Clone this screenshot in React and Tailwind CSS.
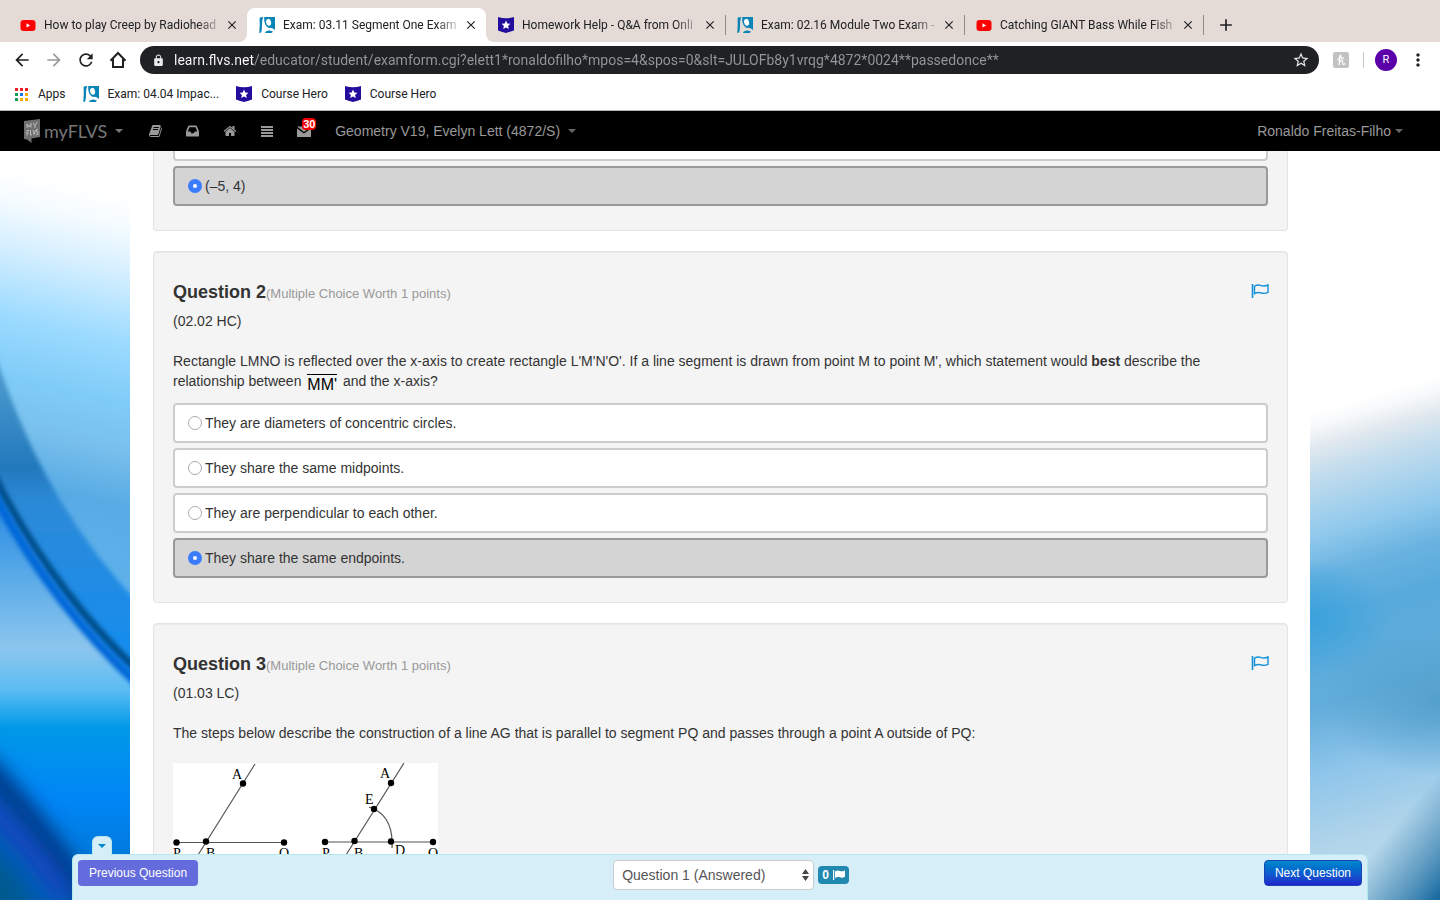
import { MdArrowBack, MdArrowForward, MdRefresh, MdLock, MdStarBorder, MdMoreVert, MdClose, MdAdd } from 'react-icons/md'

const tabs = [
  { id: 1, title: 'How to play Creep by Radiohead', icon: YoutubeIcon },
  { id: 2, title: 'Exam: 03.11 Segment One Exam', icon: FlvsIcon, active: true },
  { id: 3, title: 'Homework Help - Q&A from Onli', icon: HeroIcon, divider: true },
  { id: 4, title: 'Exam: 02.16 Module Two Exam -', icon: FlvsIcon, divider: true },
  { id: 5, title: 'Catching GIANT Bass While Fish', icon: YoutubeIcon, divider: true }
]

const bookmarks = [
  { id: 1, title: 'Apps', icon: AppsIcon },
  { id: 2, title: 'Exam: 04.04 Impac...', icon: FlvsIcon },
  { id: 3, title: 'Course Hero', icon: HeroIcon },
  { id: 4, title: 'Course Hero', icon: HeroIcon }
]

const questionTwoOptions = [
  { id: 'a', text: 'They are diameters of concentric circles.' },
  { id: 'b', text: 'They share the same midpoints.' },
  { id: 'c', text: 'They are perpendicular to each other.' },
  { id: 'd', text: 'They share the same endpoints.', checked: true }
]

function YoutubeIcon() {
  return (
    <svg className="w-4 h-4 shrink-0" viewBox="0 0 16 16">
      <rect x="0.500" y="3" width="15" height="11" rx="3" fill="#ff0000" />
      <path d="M6.5 6.3v4.2l3.600-2.1z" fill="#fff" />
    </svg>
  )
}

function FlvsIcon() {
  return (
    <svg className="w-4 h-4 shrink-0" viewBox="0 0 16 16">
      <path d="M.6.8Q2 0 4.200 0 2.800 4 3 8t-.8 7.400L.3 16Q1 8 .6.8Z" fill="#0a84b6" />
      <path d="M5.200 0H16v13q-2-1.800-4.200-2.200L10 11 9 10.500Q4.800 8 5.200 0Z" fill="#0a84b6" />
      <ellipse cx="9.600" cy="5.300" rx="2.500" ry="3.500" fill="#fff" transform="rotate(-12 9.600 5.300)" />
      <path d="M6 15.200q1.800-1.800 4.500-1.600 2.500.2 3.500 1.200L12.500 16H6.500Z" fill="#0a84b6" />
    </svg>
  )
}

function HeroIcon() {
  return (
    <svg className="w-4 h-4 shrink-0" viewBox="0 0 16 16">
      <path d="M0 0q8 2.600 16 0v13.500q-3 1-8 2.500-5-1.500-8-2.500z" fill="#230d9c" />
      <path d="m8 3.600 1.300 2.900 3.100.3-2.300 2.100.7 3.100L8 10.400 5.200 12l.7-3.100-2.300-2.100 3.100-.3z" fill="#fff" />
    </svg>
  )
}

function AppsIcon() {
  const colors = ['#ea1c2c', '#ea1c2c', '#ea1c2c', '#0f9d58', '#1a73e8', '#f9ab00', '#0f9d58', '#f9ab00', '#f9ab00']
  return (
    <svg className="w-[15px] h-[15px] shrink-0" viewBox="0 0 15 15">
      {colors.map((color, i) => (
        <rect key={i} x={1 + (i % 3) * 5} y={1 + Math.floor(i / 3) * 5} width="3" height="3" fill={color} />
      ))}
    </svg>
  )
}

function Caret({ className }) {
  return (
    <svg className={className} viewBox="0 0 8 4">
      <path d="M0 0h8L4 4z" fill="currentColor" />
    </svg>
  )
}

function FlagOutline() {
  return (
    <svg className="block w-[18px] h-4" viewBox="0 0 18 16" fill="none" stroke="#1190d8">
      <path d="M1.500 2v14" strokeWidth="1.600" />
      <path d="M3.500 4.200c2-1.200 4-1.600 6-.8s4.500 1.100 7.500-.4v7.400c-2.800 1.400-5 1.200-7 .5s-4.300-.4-6.500.7z" strokeWidth="1.400" />
    </svg>
  )
}

function BrowserTabs() {
  return (
    <div className="flex h-[42px] bg-[#e4dad6] pl-2 pt-2 text-xs text-[#202124]">
      {tabs.map((tab) => {
        const Icon = tab.icon
        return (
          <div
            key={tab.id}
            className={tab.active ? 'relative flex w-[239px] items-center rounded-t-lg bg-white pl-3 pr-[7px]' : 'relative flex w-[239px] items-center pl-3 pr-[7px]'}
          >
            {tab.active && (
              <>
                <svg className="absolute -left-2 bottom-0 w-2 h-2" viewBox="0 0 8 8">
                  <path d="M8 0v8H0a8 8 0 0 0 8-8z" fill="#fff" />
                </svg>
                <svg className="absolute -right-2 bottom-0 w-2 h-2" viewBox="0 0 8 8">
                  <path d="M0 0v8h8a8 8 0 0 1-8-8z" fill="#fff" />
                </svg>
              </>
            )}
            <Icon />
            <span className="ml-2 min-w-0 flex-1 whitespace-nowrap mask-r-from-85%">{tab.title}</span>
            <button className="flex w-4 h-4 items-center justify-center" aria-label="Close tab">
              <MdClose size={14} />
            </button>
            {tab.divider && <span className="absolute -right-px top-[7px] h-5 w-px bg-[#8f8987]" />}
          </div>
        )
      })}
      <button className="ml-[13px] flex items-center" aria-label="New tab">
        <MdAdd size={20} />
      </button>
    </div>
  )
}

function Toolbar() {
  return (
    <div className="flex h-9 items-center bg-white pl-3 pr-3 text-[#202124]">
      <div className="flex gap-3">
        <button aria-label="Back"><MdArrowBack size={20} /></button>
        <button aria-label="Forward" className="text-[#9a9b9d]"><MdArrowForward size={20} /></button>
        <button aria-label="Reload"><MdRefresh size={20} /></button>
        <button aria-label="Home">
          <svg className="w-5 h-5" viewBox="0 0 20 20" fill="none" stroke="currentColor" strokeWidth="2">
            <path d="M2.500 10.800 10 3l7.500 7.800M5 9v8h10V9" />
          </svg>
        </button>
      </div>
      <div className="ml-3 flex h-7 flex-1 items-center rounded-full bg-[#202124] pl-3 pr-[9px] text-[#e8eaed]">
        <MdLock size={13} className="shrink-0" />
        <input
          aria-label="Address"
          className="ml-[9px] min-w-0 flex-1 bg-linear-to-r from-white from-[80px] to-[#94979b] to-[80px] bg-clip-text text-sm text-transparent outline-none"
          defaultValue="learn.flvs.net/educator/student/examform.cgi?elett1*ronaldofilho*mpos=4&spos=0&slt=JULOFb8y1vrqg*4872*0024**passedonce**"
        />
        <button aria-label="Bookmark this page"><MdStarBorder size={18} /></button>
      </div>
      <button className="ml-[14px] flex w-4 h-4 items-center justify-center rounded-xs bg-[#c2c2c2]" aria-label="Honey">
        <svg className="w-3 h-3" viewBox="0 0 12 12" fill="none" stroke="#fff" strokeWidth="1.200">
          <path d="M2 5.500C5 4.500 6.500 3 5.800 1.400 4.800.6 4.400 3 4.200 11M4.300 9C5 6 7.600 5 7.500 7.300 7.200 10 8 11.500 10 9.500M6 4.200h3" />
        </svg>
      </button>
      <span className="ml-[14px] h-4 w-px bg-[#c4c5c7]" />
      <button className="ml-[11px] w-[22px] h-[22px] rounded-full bg-[#5b00a8] text-[11px] text-white">R</button>
      <button className="ml-[11px]" aria-label="Menu"><MdMoreVert size={20} /></button>
    </div>
  )
}

function BookmarksBar() {
  return (
    <div className="flex h-[33px] items-center gap-[17px] border-b border-[#b6b4b6] bg-white px-[14px] text-xs text-[#202124]">
      {bookmarks.map((bookmark) => {
        const Icon = bookmark.icon
        return (
          <a key={bookmark.id} href="#" className="flex items-center gap-[9px]">
            <Icon />
            {bookmark.title}
          </a>
        )
      })}
    </div>
  )
}

function SiteNav() {
  return (
    <nav className="flex h-10 items-center bg-black px-6 text-sm text-[#999]">
      <a href="#" className="flex items-center text-[#777]">
        <svg className="w-4 h-6" viewBox="0 0 16 24">
          <path d="M0 2 16 0v18l-8.500 1.500V24L3 20.500 0 20z" fill="#707070" />
          <path d="M3 9V5l2 3 2-3.500v4M9 4l2 2.500L13 3M11 6.500V9M3 16.500v-5h2M3 14h1.500M6.500 11v5h1.500M9 11l1.200 4.500L11.500 11M14 10.500h-1.500v2.200H14v2.600h-2" fill="none" stroke="#c4c4c4" strokeWidth="0.900" />
        </svg>
        <span className="ml-1 font-[Lato] text-lg leading-6">myFLVS</span>
        <Caret className="ml-2 w-2 h-1" />
      </a>
      <div className="ml-[26px] flex items-center gap-6">
        <a href="#" aria-label="Courses">
          <svg className="w-[13px] h-[14px]" viewBox="0 0 1664 1792" fill="currentColor">
            <path d="M1639 478q40 57 18 129l-275 906q-19 64-76.5 107.5t-122.5 43.5h-923q-77 0-148.5-53.5t-99.5-131.5q-24-67-2-127 0-4 3-27t4-37q1-8-3-21.5t-3-19.5q2-11 8-21t16.500-23.500 16.500-23.500q23-38 45-91.500t30-91.500q3-10 .5-30t-.5-28q3-11 17-28t17-23q21-36 42-92t25-90q1-9-2.500-32t.5-28q4-13 22-30.500t22-22.500q19-26 42.500-84.500t27.500-96.500q1-8-3-25.500t-2-26.500q2-8 9-18t18-23 17-21q8-12 16.500-30.500t15-35 16-36 19.500-32 26.500-23.500 36-11.500 47.500 5.500l-1 3q38-9 51-9h761q74 0 114 56t18 130l-274 906q-36 119-71.500 153.500t-128.500 34.500h-869q-27 0-38 15-11 16-1 43 24 70 144 70h923q29 0 56-15.500t35-41.500l300-987q7-22 5-57 38 15 59 43zm-1064 2q-4 13 2 22.500t20 9.500h608q13 0 25.500-9.500t16.500-22.500l21-64q4-13-2-22.500t-20-9.500h-608q-13 0-25.500 9.500t-16.500 22.500zm-83 256q-4 13 2 22.500t20 9.500h608q13 0 25.500-9.500t16.500-22.500l21-64q4-13-2-22.500t-20-9.500h-608q-13 0-25.500 9.500t-16.500 22.500z" />
          </svg>
        </a>
        <a href="#" aria-label="Inbox">
          <svg className="w-[13px] h-[14px]" viewBox="128 128 1536 1536" fill="currentColor">
            <path d="M1151 960h316q-1-3-2.500-8.500t-2.500-8.500l-212-496h-708l-212 496q-1 3-2.500 8.500t-2.500 8.500h316l95 192h320zm513 30v482q0 26-19 45t-45 19h-1408q-26 0-45-19t-19-45v-482q0-62 25-123l238-552q10-25 36.500-42t52.500-17h832q26 0 52.500 17t36.500 42l238 552q25 61 25 123z" />
          </svg>
        </a>
        <a href="#" aria-label="Home">
          <svg className="w-[14px] h-[14px]" viewBox="0 0 1792 1792" fill="currentColor">
            <path d="M1472 992v480q0 26-19 45t-45 19h-384v-384h-256v384h-384q-26 0-45-19t-19-45v-480q0-1 .5-3t.5-3l575-474 575 474q1 2 1 6zm223-69l-62 74q-8 9-21 11h-3q-13 0-21-7l-692-577-692 577q-12 8-24 7-13-2-21-11l-62-74q-8-10-7-23.500t11-21.500l719-599q32-26 76-26t76 26l244 204v-195q0-14 9-23t23-9h192q14 0 23 9t9 23v408l219 182q10 8 11 21.500t-7 23.500z" />
          </svg>
        </a>
        <a href="#" aria-label="Menu">
          <svg className="w-3 h-[14px]" viewBox="0 0 12 14" fill="currentColor">
            <path d="M0 2h12v2H0zM0 5h12v2H0zM0 8h12v2H0zM0 11h12v2H0z" />
          </svg>
        </a>
        <a href="#" className="relative" aria-label="Messages">
          <svg className="w-[14px] h-[14px]" viewBox="0 0 14 14" fill="currentColor">
            <path d="M0 2.500h14L7 8zM0 4.500l7 5 7-5V13H0z" />
          </svg>
          <span className="absolute -top-[6px] left-[5px] rounded-sm bg-[#f00000] px-px text-[11px] font-bold leading-3 text-white">30</span>
        </a>
      </div>
      <a href="#" className="ml-6 flex items-center">
        Geometry V19, Evelyn Lett (4872/S)
        <Caret className="ml-2 w-2 h-1 text-[#666]" />
      </a>
      <a href="#" className="ml-auto mr-[13px] flex items-center">
        Ronaldo Freitas-Filho
        <Caret className="ml-1 w-2 h-1 text-[#666]" />
      </a>
    </nav>
  )
}

function Backdrop() {
  return (
    <>
      <svg className="absolute left-0 top-0 h-full w-[130px]" viewBox="0 0 130 749" preserveAspectRatio="none">
        <defs>
          <linearGradient id="sky" gradientUnits="userSpaceOnUse" x1="100" y1="40" x2="0" y2="473">
            <stop offset="0" stopColor="#fff" />
            <stop offset="0.07" stopColor="#f4fbff" />
            <stop offset="0.16" stopColor="#d8f0ff" />
            <stop offset="0.32" stopColor="#9cdbff" />
            <stop offset="0.45" stopColor="#80ccf8" />
            <stop offset="0.56" stopColor="#78bfec" />
            <stop offset="0.68" stopColor="#57abe4" />
            <stop offset="1" stopColor="#66b6f0" />
          </linearGradient>
          <linearGradient id="band" x1="0" y1="0" x2="0" y2="1">
            <stop offset="0" stopColor="#5fa8d4" />
            <stop offset="0.2" stopColor="#3d8fc8" />
            <stop offset="0.38" stopColor="#2379bd" />
            <stop offset="0.48" stopColor="#2d8ad8" />
            <stop offset="1" stopColor="#128df2" />
          </linearGradient>
          <linearGradient id="lower" gradientUnits="userSpaceOnUse" x1="0" y1="330" x2="0" y2="749">
            <stop offset="0" stopColor="#2080e0" />
            <stop offset="0.18" stopColor="#4ba2e6" />
            <stop offset="0.4" stopColor="#8cc6ee" />
            <stop offset="0.5" stopColor="#5abcf4" />
            <stop offset="0.59" stopColor="#0098e8" />
            <stop offset="0.76" stopColor="#0086f6" />
            <stop offset="1" stopColor="#0070c8" />
          </linearGradient>
          <filter id="soft" filterUnits="userSpaceOnUse" x="-60" y="-60" width="260" height="900"><feGaussianBlur stdDeviation="2" /></filter>
          <filter id="softer" filterUnits="userSpaceOnUse" x="-100" y="-60" width="330" height="960"><feGaussianBlur stdDeviation="10" /></filter>
        </defs>
        <rect width="130" height="749" fill="url(#sky)" />
        <path d="M0 335Q54 434 130 522V749H0z" fill="url(#lower)" />
        <path d="M-10 185Q36 345 140 454V532Q50 450-10 320z" fill="url(#band)" filter="url(#soft)" />
        <path d="M-10 318Q50 438 140 522" fill="none" stroke="#06508c" strokeWidth="8" filter="url(#soft)" />
        <path d="M-10 336Q50 452 140 535" fill="none" stroke="#0068d8" strokeWidth="9" filter="url(#soft)" />
        <path d="M-40 575Q20 630 80 720L130 800H-40z" fill="#005cb8" filter="url(#softer)" />
        <path d="M-20 612Q20 650 90 750" fill="none" stroke="#04307c" strokeWidth="16" filter="url(#softer)" />
        <path d="M-20 650Q20 682 66 745" fill="none" stroke="#1a40c4" strokeWidth="14" filter="url(#softer)" />
        <path d="M-30 690Q10 695 50 790H-30z" fill="#005a90" filter="url(#softer)" />
      </svg>
      <svg className="absolute right-0 top-0 h-full w-[130px]" viewBox="0 0 130 749" preserveAspectRatio="none">
        <defs>
          <linearGradient id="haze" gradientUnits="userSpaceOnUse" x1="0" y1="262" x2="140" y2="741">
            <stop offset="0" stopColor="#fff" />
            <stop offset="0.03" stopColor="#f6f8fa" />
            <stop offset="0.07" stopColor="#e0e8ee" />
            <stop offset="0.12" stopColor="#c4dded" />
            <stop offset="0.24" stopColor="#90c9ec" />
            <stop offset="0.32" stopColor="#68b2e0" />
            <stop offset="0.4" stopColor="#58aadc" />
            <stop offset="0.57" stopColor="#62addb" />
            <stop offset="0.7" stopColor="#8ec5ea" />
            <stop offset="0.84" stopColor="#b0d4ea" />
            <stop offset="1" stopColor="#c4e0ee" />
          </linearGradient>
          <radialGradient id="pool">
            <stop offset="0" stopColor="#3aa2dc" />
            <stop offset="1" stopColor="#3aa2dc" stopOpacity="0" />
          </radialGradient>
          <radialGradient id="shade">
            <stop offset="0" stopColor="#539fcc" />
            <stop offset="1" stopColor="#539fcc" stopOpacity="0" />
          </radialGradient>
          <linearGradient id="corner" gradientUnits="userSpaceOnUse" x1="74" y1="688" x2="134" y2="738">
            <stop offset="0" stopColor="#3a82b0" stopOpacity="0" />
            <stop offset="0.5" stopColor="#3a82b0" stopOpacity="0.6" />
            <stop offset="1" stopColor="#1a6ca2" />
          </linearGradient>
        </defs>
        <rect width="130" height="749" fill="url(#haze)" />
        <ellipse cx="0" cy="468" rx="80" ry="60" fill="url(#pool)" />
        <ellipse cx="130" cy="550" rx="120" ry="75" fill="url(#shade)" />
        <rect width="130" height="749" fill="url(#corner)" />
      </svg>
    </>
  )
}

function Option({ name, text, checked }) {
  return (
    <label className="flex h-10 items-center gap-[3px] rounded-sm border-2 border-[#ccc] bg-white pl-[13px] has-checked:border-[#999] has-checked:bg-[#d4d4d4]">
      <input
        type="radio"
        name={name}
        defaultChecked={checked}
        className="w-[14px] h-[14px] shrink-0 appearance-none rounded-full border border-[#aaa] bg-white checked:border-[5px] checked:border-[#3b7cff]"
      />
      {text}
    </label>
  )
}

function QuestionCard({ number, code, children }) {
  return (
    <section className="rounded-sm border border-[#e3e3e3] bg-[#f4f4f4] px-[19px] pt-[30px] pb-6 shadow-[inset_0_1px_1px_rgba(0,0,0,0.05)]">
      <div className="flex h-5 items-start justify-between">
        <h4 className="text-lg font-bold leading-5">
          Question {number}
          <small className="text-[13px] font-normal text-[#999]">(Multiple Choice Worth 1 points)</small>
        </h4>
        <button className="-mr-px" aria-label="Flag question"><FlagOutline /></button>
      </div>
      <p className="mt-[9px]">{code}</p>
      {children}
    </section>
  )
}

function Construction() {
  return (
    <svg className="mt-5 block h-[180px] w-[265px] bg-white" viewBox="0 0 265 180" fontFamily="'Liberation Serif', serif" fontSize="14">
      <g stroke="#555" strokeWidth="1.200" fill="none">
        <path d="M3 79.500h108M82 1 25 92" />
        <path d="M152 79h108M231 0 173 92M196 44Q221 52 219 85" />
      </g>
      <g fill="#000">
        <circle cx="3.500" cy="79.500" r="3.200" />
        <circle cx="33" cy="78.500" r="3.200" />
        <circle cx="111" cy="79.500" r="3.200" />
        <circle cx="70" cy="20.500" r="3.200" />
        <circle cx="152" cy="79" r="3.200" />
        <circle cx="181.500" cy="78" r="3.200" />
        <circle cx="218" cy="78.500" r="3.200" />
        <circle cx="260" cy="79" r="3.200" />
        <circle cx="218" cy="20" r="3.200" />
        <circle cx="201" cy="46" r="3.200" />
        <text x="59" y="16">A</text>
        <text x="0" y="95">P</text>
        <text x="33" y="95">B</text>
        <text x="106" y="95">Q</text>
        <text x="207" y="15">A</text>
        <text x="192" y="41">E</text>
        <text x="149" y="95">P</text>
        <text x="181" y="95">B</text>
        <text x="222" y="92">D</text>
        <text x="255" y="95">Q</text>
      </g>
    </svg>
  )
}

function ExamFooter() {
  return (
    <footer className="absolute inset-x-[5%] bottom-0 flex h-[46px] items-start justify-between rounded-t-md border border-b-0 border-[#b2e8ee] bg-[#d6eef8] px-[5px] pt-[5px]">
      <button className="absolute -top-[19px] left-[19px] flex h-[19px] w-5 items-center justify-center rounded-t-md border border-b-0 border-[#b2e8ee] bg-[#d6eef8] text-[#0088cc]" aria-label="Hide bar">
        <Caret className="w-2 h-1" />
      </button>
      <button className="h-[26px] rounded-sm bg-[#646bdc] px-[11px] text-xs text-white">Previous Question</button>
      <div className="flex items-center">
        <div className="relative">
          <select aria-label="Jump to question" className="h-[30px] w-[201px] appearance-none rounded-sm border border-[#ccc] bg-white px-2 text-sm text-[#555]">
            <option>Question 1 (Answered)</option>
          </select>
          <svg className="pointer-events-none absolute right-[5px] top-[9px] h-3 w-[7px]" viewBox="0 0 7 12" fill="#444">
            <path d="M0 5h7L3.500 0zM0 7h7l-3.500 5z" />
          </svg>
        </div>
        <span className="ml-1 flex h-[18px] items-center gap-1 rounded-sm bg-[#2188b0] px-1 text-xs font-bold text-white">
          0
          <svg className="w-3 h-3" viewBox="0 0 12 12" fill="#fff">
            <path d="M0 1h1.200v10H0zM2 2.500C4 1 5.500 1.400 7 2s3 .5 5-.8v6.500c-2 1.200-3.500 1.200-5 .6s-3-.6-5 .7z" />
          </svg>
        </span>
      </div>
      <button className="h-[26px] rounded-sm border border-[#1a44b4] bg-linear-to-b from-[#0088cc] to-[#2222cc] px-[10px] text-xs text-white">Next Question</button>
    </footer>
  )
}

function App() {
  return (
    <div className="flex h-screen flex-col overflow-hidden bg-white font-['Liberation_Sans',Arial,sans-serif]">
      <header className="font-[Roboto,sans-serif]">
        <BrowserTabs />
        <Toolbar />
        <BookmarksBar />
      </header>
      <SiteNav />

      <div className="relative flex-1 overflow-hidden">
        <Backdrop />

        {/* Exam questions */}
        <main className="relative mx-auto min-h-full max-w-[1180px] bg-white pl-[23px] pr-[22px] text-sm leading-5 text-[#333]">
          <section className="rounded-b-sm border border-t-0 border-[#e3e3e3] bg-[#f4f4f4] px-[19px] pb-6">
            <div className="mb-[5px] h-[10px] rounded-b-sm border-2 border-t-0 border-[#ccc] bg-white" />
            <Option name="q1" text="(–5, 4)" checked />
          </section>

          <div className="mt-5 flex flex-col gap-5">
            <QuestionCard number={2} code="(02.02 HC)">
              <p className="mt-5">
                Rectangle LMNO is reflected over the x-axis to create rectangle L'M'N'O'. If a line segment is drawn from point M to point M', which statement would <b>best</b> describe the relationship between <span className="mx-0.5 mt-[3px] inline-block border-t border-black align-top text-base leading-5 text-black">MM'</span> and the x-axis?
              </p>
              <div className="mt-2 flex flex-col gap-[5px]">
                {questionTwoOptions.map((option) => (
                  <Option key={option.id} name="q2" text={option.text} checked={option.checked} />
                ))}
              </div>
            </QuestionCard>

            <QuestionCard number={3} code="(01.03 LC)">
              <p className="mt-5">
                The steps below describe the construction of a line AG that is parallel to segment PQ and passes through a point A outside of PQ:
              </p>
              <Construction />
            </QuestionCard>
          </div>
        </main>

        <ExamFooter />
      </div>
    </div>
  )
}

export default App
